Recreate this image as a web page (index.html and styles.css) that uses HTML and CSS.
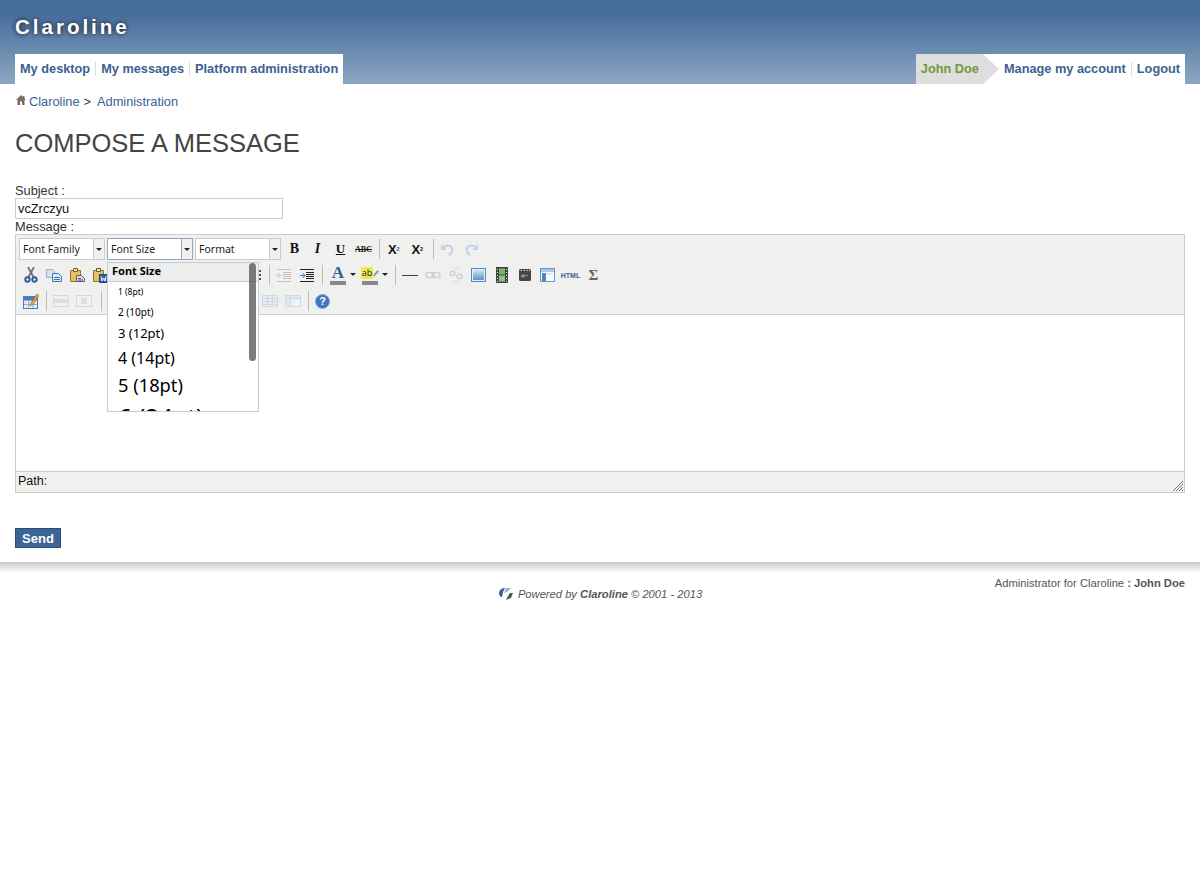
FILE: index.html
```html
<!DOCTYPE html>
<html lang="en">
<head>
    <meta charset="UTF-8">
    <meta name="viewport" content="width=device-width, initial-scale=1.0">
    <title>Compose a message - Claroline</title>
    <link rel="stylesheet" href="styles.css">
</head>
<body>
    <svg class="sprites" width="0" height="0">
        <defs>
            <linearGradient id="blueFill" x1="0" y1="0" x2="0" y2="1">
                <stop offset="0" stop-color="#cfe0f2"/>
                <stop offset="1" stop-color="#5f93c9"/>
            </linearGradient>
            <symbol id="i-cut" viewBox="0 0 16 16">
                <path d="M5 0l5.500 10M11 0L5.500 10" stroke="#66727f" stroke-width="1.800" fill="none"/>
                <circle cx="4.500" cy="12.500" r="2.200" fill="none" stroke="#2a5a9c" stroke-width="1.900"/>
                <circle cx="11.500" cy="12.500" r="2.200" fill="none" stroke="#2a5a9c" stroke-width="1.900"/>
            </symbol>
            <symbol id="i-copy" viewBox="0 0 16 16">
                <path d="M.5 2.500h6l2 2v6h-8z" fill="#d5e3f3" stroke="#8fb0d6"/>
                <path d="M6.500 6.500h6l3 3v5h-9z" fill="#dfeaf6" stroke="#3f74b5"/>
                <path d="M8 10.500h6M8 12.500h6" stroke="#3f74b5"/>
            </symbol>
            <symbol id="i-paste" viewBox="0 0 16 16">
                <path d="M1.500 3.500h10v11h-10z" fill="#e6c164" stroke="#94712a"/>
                <path d="M4.500 1.500h4v3h-4z" fill="#f2e3b0" stroke="#6d5a2a"/>
                <path d="M7.500 8.500h5l3 3v3h-8z" fill="#d9dde2" stroke="#55606e"/>
                <path d="M9 11.500h3M9 13h5" stroke="#55606e"/>
            </symbol>
            <symbol id="i-word" viewBox="0 0 16 16">
                <path d="M1.500 3.500h10v11h-10z" fill="#e6c164" stroke="#94712a"/>
                <path d="M4.500 1.500h4v3h-4z" fill="#f2e3b0" stroke="#6d5a2a"/>
                <path d="M7.500 7.500h8v8h-8z" fill="#2d62ad" stroke="#1d4380"/>
                <path d="M9 9.500l1 4.500 1.500-3 1.500 3 1-4.500" fill="none" stroke="#fff"/>
            </symbol>
            <symbol id="i-outdent" viewBox="0 0 16 16">
                <path d="M1 2.500h14M7 5.500h8M7 7.500h8M7 9.500h8M7 11.500h8M1 14.500h14" stroke="#c2c2c2"/>
                <path d="M6 8.500H1M3.500 6L1 8.500 3.500 11" stroke="#b6cde6" fill="none"/>
            </symbol>
            <symbol id="i-indent" viewBox="0 0 16 16">
                <path d="M1 2.500h14M7 5.500h8M7 7.500h8M7 9.500h8M7 11.500h8M1 14.500h14" stroke="#1f1f1f"/>
                <path d="M1 8.500h5M3.500 6L6 8.500 3.500 11" stroke="#2f74c0" fill="none"/>
            </symbol>
            <symbol id="i-link" viewBox="0 0 16 16">
                <rect x="1" y="5.500" width="8" height="5" rx="2.500" fill="none" stroke="#cdd1d6" stroke-width="1.500"/>
                <rect x="7" y="5.500" width="8" height="5" rx="2.500" fill="none" stroke="#cdd1d6" stroke-width="1.500"/>
            </symbol>
            <symbol id="i-unlink" viewBox="0 0 16 16">
                <rect x="2" y="4.500" width="5" height="4" rx="2" fill="none" stroke="#cdd1d6" stroke-width="1.400"/>
                <rect x="9" y="7.500" width="5" height="4" rx="2" fill="none" stroke="#cdd1d6" stroke-width="1.400"/>
                <path d="M4 0l1.500 2.500M12 0l-1.500 2.500M4 16l1.500-2.500M12 16l-1.500-2.500M8 0v3M8 13v3" stroke="#d8dbde"/>
            </symbol>
            <symbol id="i-image" viewBox="0 0 16 16">
                <rect x=".5" y="1.500" width="14" height="13" fill="#e9eef4" stroke="#5d88b5"/>
                <rect x="2" y="3" width="11" height="10" fill="url(#blueFill)"/>
            </symbol>
            <symbol id="i-media" viewBox="0 0 16 16">
                <path d="M2 0h12v16H2z" fill="#3c4a3c"/>
                <path d="M5 1.500h6v6H5z" fill="#7cb56c"/>
                <path d="M5 8.500h6v6H5z" fill="#8fbf8a"/>
                <path d="M3 2.500h1M3 5.500h1M3 8.500h1M3 11.500h1M3 14.500h1M12 2.500h1M12 5.500h1M12 8.500h1M12 11.500h1M12 14.500h1" stroke="#ddd"/>
            </symbol>
            <symbol id="i-video" viewBox="0 0 16 16">
                <rect x="2" y="2" width="12" height="12" rx="1.500" fill="#444"/>
                <path d="M3.500 3.500h1.500M6.500 3.500H8M9.500 3.500H11M12 3.500h1" stroke="#ddd"/>
                <path d="M5 7.500v3M5 9h2M7 7.500v3M8.500 8.500h2" stroke="#bbb"/>
            </symbol>
            <symbol id="i-template" viewBox="0 0 16 16">
                <rect x=".5" y="1.500" width="14" height="13" fill="#fafcff" stroke="#6b94bf"/>
                <path d="M1 2h13v3H1z" fill="#a9c6e4"/>
                <path d="M2 6h4v8H2z" fill="#4f86c0"/>
                <path d="M7 6h6v2H7z" fill="#dbe7f3"/>
            </symbol>
            <symbol id="i-undo" viewBox="0 0 16 16">
                <path d="M3 7c3-4 10-3 9 3-.4 2-2 3.500-3 4" fill="none" stroke="#c3d3e6" stroke-width="2.200"/>
                <path d="M1 3v6h6z" fill="#c3d3e6"/>
            </symbol>
            <symbol id="i-redo" viewBox="0 0 16 16">
                <path d="M13 7C10 3 3 4 4 10c.4 2 2 3.500 3 4" fill="none" stroke="#c3d3e6" stroke-width="2.200"/>
                <path d="M15 3v6H9z" fill="#c3d3e6"/>
            </symbol>
            <symbol id="i-tableedit" viewBox="0 0 16 16">
                <rect x=".5" y="3.500" width="14" height="12" fill="#e3edf7" stroke="#4f7fb5"/>
                <path d="M1 7.500h13M1 11.500h13M5.500 4v11M10 4v11" stroke="#8fb0d6"/>
                <path d="M1 4h13v3H1z" fill="#4f7fb5"/>
                <path d="M8 10l6-9 2 1.500-6 9-3 1z" fill="#e8a040" stroke="#8b5a1c" stroke-width=".6"/>
            </symbol>
            <symbol id="i-tablerow" viewBox="0 0 16 16">
                <rect x=".5" y="2.500" width="15" height="11" fill="#eef0f2" stroke="#d5d9dd"/>
                <path d="M1 6h14v4H1z" fill="#d9dee3"/>
            </symbol>
            <symbol id="i-tablecell" viewBox="0 0 16 16">
                <rect x=".5" y="2.500" width="15" height="11" fill="#eef0f2" stroke="#d5d9dd"/>
                <rect x="5" y="5" width="6" height="6" fill="#d9dee3"/>
            </symbol>
            <symbol id="i-grid" viewBox="0 0 16 16">
                <rect x=".5" y="2.500" width="15" height="11" fill="#e6edf5" stroke="#d0d8e0"/>
                <path d="M1 5.500h14M1 8.500h14M1 11.500h14M5.500 3v10M10.500 3v10" stroke="#d0d8e0"/>
            </symbol>
            <symbol id="i-panel" viewBox="0 0 16 16">
                <rect x=".5" y="2.500" width="15" height="11" fill="#dfe9f3" stroke="#d0d8e0"/>
                <path d="M1 5.500h14M5.500 3v10" stroke="#d0d8e0"/>
                <rect x="6" y="6" width="9" height="7" fill="#edf3f8"/>
            </symbol>
            <symbol id="i-pencil" viewBox="0 0 8 10">
                <path d="M1 7l5-6 2 1.500-5 6-3 1z" fill="#8d9aa8"/>
            </symbol>
            <symbol id="i-house" viewBox="0 0 10 10">
                <path d="M5 0L0 5h1.500v5h2.500V6.500h2V10h2.500V5H10L8.500 3.500V1H7v1z" fill="#7a6a60"/>
            </symbol>
            <symbol id="i-grip" viewBox="0 0 12 12">
                <path d="M1 11L11 1M4 11l7-7M7 11l4-4M10 11l1-1" stroke="#777" fill="none"/>
            </symbol>
        </defs>
    </svg>

    <header class="banner">
        <div class="logo">Claroline</div>
        <nav class="tabs">
            <ul class="tab-group">
                <li><a href="#">My desktop</a></li>
                <li><a href="#">My messages</a></li>
                <li><a href="#">Platform administration</a></li>
            </ul>
            <ul class="tab-group">
                <li class="user-name">John Doe</li>
                <li><a href="#">Manage my account</a></li>
                <li><a href="#">Logout</a></li>
            </ul>
        </nav>
    </header>

    <main class="content">
        <div class="breadcrumb">
            <svg class="home-icon"><use href="#i-house"/></svg>
            <a href="#">Claroline</a>
            <span class="crumb-sep">&gt;</span>
            <a href="#">Administration</a>
        </div>

        <h1>COMPOSE A MESSAGE</h1>

        <form class="message-form">
            <label for="subject">Subject :</label>
            <input type="text" id="subject" value="vcZrczyu">
            <label for="message">Message :</label>

            <div class="editor" id="message">
                <div class="toolbar">
                    <div class="tool-row">
                        <div class="select select-family"><span>Font Family</span><i></i></div>
                        <div class="select select-size"><span>Font Size</span><i></i></div>
                        <div class="select select-format"><span>Format</span><i></i></div>
                        <div class="btn glyph bold">B</div>
                        <div class="btn glyph italic">I</div>
                        <div class="btn glyph under">U</div>
                        <div class="btn glyph strike">ABC</div>
                        <div class="sep"></div>
                        <div class="btn glyph script">X<sub>2</sub></div>
                        <div class="btn glyph script">X<sup>2</sup></div>
                        <div class="sep"></div>
                        <div class="btn"><svg><use href="#i-undo"/></svg></div>
                        <div class="btn"><svg><use href="#i-redo"/></svg></div>
                    </div>
                    <div class="tool-row">
                        <div class="btn"><svg><use href="#i-cut"/></svg></div>
                        <div class="btn"><svg><use href="#i-copy"/></svg></div>
                        <div class="btn"><svg><use href="#i-paste"/></svg></div>
                        <div class="btn"><svg><use href="#i-word"/></svg></div>
                        <div class="hidden-tools"></div>
                        <div class="dots"></div>
                        <div class="sep"></div>
                        <div class="btn"><svg><use href="#i-outdent"/></svg></div>
                        <div class="btn"><svg><use href="#i-indent"/></svg></div>
                        <div class="sep"></div>
                        <div class="btn color color-fore"><span class="fore">A</span><b class="color-bar"></b></div>
                        <i class="mini-arrow"></i>
                        <div class="btn color">
                            <span class="back-row"><span class="back">ab</span><svg class="pencil"><use href="#i-pencil"/></svg></span>
                            <b class="color-bar"></b>
                        </div>
                        <i class="mini-arrow"></i>
                        <div class="sep"></div>
                        <div class="btn"><span class="rule"></span></div>
                        <div class="btn"><svg><use href="#i-link"/></svg></div>
                        <div class="btn"><svg><use href="#i-unlink"/></svg></div>
                        <div class="btn"><svg><use href="#i-image"/></svg></div>
                        <div class="btn"><svg><use href="#i-media"/></svg></div>
                        <div class="btn"><svg><use href="#i-video"/></svg></div>
                        <div class="btn"><svg><use href="#i-template"/></svg></div>
                        <div class="btn glyph html">HTML</div>
                        <div class="btn glyph sigma">&Sigma;</div>
                    </div>
                    <div class="tool-row">
                        <div class="btn"><svg><use href="#i-tableedit"/></svg></div>
                        <div class="sep"></div>
                        <div class="btn"><svg><use href="#i-tablerow"/></svg></div>
                        <div class="btn"><svg><use href="#i-tablecell"/></svg></div>
                        <div class="sep sep-wide"></div>
                        <div class="hidden-tools short"></div>
                        <div class="btn"><svg><use href="#i-grid"/></svg></div>
                        <div class="btn"><svg><use href="#i-panel"/></svg></div>
                        <div class="sep"></div>
                        <div class="btn help"><span>?</span></div>
                    </div>
                </div>
                <div class="edit-area"></div>
                <div class="status-bar">
                    <span>Path:</span>
                    <svg class="grip"><use href="#i-grip"/></svg>
                </div>

                <div class="size-menu">
                    <div class="size-title">Font Size</div>
                    <div class="size-item s1">1 (8pt)</div>
                    <div class="size-item s2">2 (10pt)</div>
                    <div class="size-item s3">3 (12pt)</div>
                    <div class="size-item s4">4 (14pt)</div>
                    <div class="size-item s5">5 (18pt)</div>
                    <div class="size-item s6">6 (24pt)</div>
                    <div class="size-scroll"></div>
                </div>
            </div>

            <button type="submit" class="send">Send</button>
        </form>
    </main>

    <footer class="footer">
        <div class="admin-line">Administrator for Claroline <b>: John Doe</b></div>
        <div class="powered">
            <svg class="powered-logo" viewBox="0 0 16 14">
                <path d="M1 6c0-3 3-5 6-5L5 5 4 10C2 10 1 8 1 6z" fill="#3c5f95"/>
                <path d="M8 1h5l-4 4-3 1z" fill="#9fb2cc"/>
                <path d="M12 6l3 0-2 5-5 2 2-4z" fill="#555"/>
            </svg>
            <span>Powered by <b>Claroline</b> &copy; 2001 - 2013</span>
        </div>
    </footer>
</body>
</html>
```

FILE: styles.css
```css
* {
    margin: 0;
    padding: 0;
    box-sizing: border-box;
}

body {
    background-color: white;
    color: #333;
    font-family: "Liberation Sans", Arial, sans-serif;
    font-size: 13px;
}

a {
    color: #3a6291;
    text-decoration: none;
}

ul {
    list-style: none;
}

.sprites {
    position: absolute;
}

/* banner */
.banner {
    height: 84px;
    padding: 0 15px;
    background: linear-gradient(#456c9b 0%, #456c9b 15%, #8ea6c2 100%);
    display: flex;
    flex-direction: column;
}

.logo {
    height: 54px;
    padding-top: 15px;
    color: white;
    font-size: 20.5px;
    line-height: 23px;
    font-weight: bold;
    letter-spacing: 3px;
    text-shadow: 0 0 5px rgba(0, 0, 0, 0.9);
}

.tabs {
    display: flex;
    justify-content: space-between;
    height: 30px;
}

.tab-group {
    display: flex;
    align-items: center;
    background-color: white;
    padding: 0 5px;
    font-weight: bold;
    font-size: 12.75px;
}

.tab-group li {
    padding: 0 5px;
    border-left: 1px solid #ddd;
    line-height: 14px;
}

.tab-group li:first-child,
.tab-group .user-name + li {
    padding-left: 0;
    border-left: 0;
}

.tab-group li:last-child {
    padding-right: 0;
}

.tab-group li.user-name {
    position: relative;
    align-self: stretch;
    margin: 0 21px 0 -5px;
    padding: 0 4px 0 5px;
    line-height: 30px;
    color: #6f9a3c;
    background-color: #dedede;
}

.user-name::after {
    content: "";
    position: absolute;
    left: 100%;
    top: 0;
    border-left: 16px solid #dedede;
    border-top: 15px solid transparent;
    border-bottom: 15px solid transparent;
}

/* content */
.content {
    padding: 0 15px;
}

.breadcrumb {
    height: 36px;
    padding-top: 10px;
    display: flex;
    align-items: flex-start;
    line-height: 15px;
    font-size: 12.8px;
}

.home-icon {
    width: 10px;
    height: 10px;
    margin: 1px 3px 0 1px;
}

.crumb-sep {
    margin: 0 6px 0 4px;
}

h1 {
    height: 64px;
    padding-top: 8px;
    font-size: 25.5px;
    line-height: 30px;
    font-weight: normal;
    color: #444;
}

.message-form label {
    display: block;
    line-height: 14px;
    font-size: 12.8px;
}

.message-form input {
    display: block;
    width: 268px;
    height: 21px;
    padding: 0 2px;
    border: 1px solid #ccc;
    margin-bottom: 1px;
    font-family: "Liberation Sans", Arial, sans-serif;
    font-size: 12.8px;
    color: #111;
}

/* editor */
.editor {
    position: relative;
    height: 259px;
    display: flex;
    flex-direction: column;
    border: 1px solid #ccc;
    font-family: "Noto Sans", sans-serif;
}

.toolbar {
    height: 80px;
    padding: 1px 0 0 3px;
    background-color: #f0f0ee;
    border-bottom: 1px solid #ccc;
}

.tool-row {
    display: flex;
    align-items: center;
    height: 26px;
}

.select {
    display: flex;
    align-items: stretch;
    height: 22px;
    margin-right: 2px;
    font-size: 10.5px;
    color: #222;
    background-color: white;
    border: 1px solid #ccc;
}

.select span {
    flex: 1;
    padding-left: 3px;
    line-height: 20px;
    border-right: 1px solid #ccc;
}

.select i {
    width: 10px;
    background-color: #f0f0ee;
    position: relative;
}

.select i::after,
.mini-arrow::after {
    content: "";
    position: absolute;
    left: 2px;
    top: 9px;
    border-top: 3px solid #222;
    border-left: 3px solid transparent;
    border-right: 3px solid transparent;
}

.select-family,
.select-format {
    width: 86px;
}

.select-size {
    width: 86px;
    border-color: #8ea7c6;
}

.select-size span {
    border-color: #8ea7c6;
}

.btn {
    flex: none;
    width: 23px;
    height: 22px;
    display: flex;
    align-items: center;
    justify-content: center;
    position: relative;
}

.btn svg {
    width: 16px;
    height: 16px;
}

.sep {
    flex: none;
    width: 1px;
    height: 20px;
    margin: 0 2px 0 4px;
    background-color: #bbb;
}

.sep-wide {
    margin-left: 6px;
}

.glyph {
    color: #111;
    font-family: "Liberation Serif", serif;
    font-weight: bold;
}

.bold {
    font-size: 14px;
}

.italic {
    font-size: 14px;
    font-style: italic;
}

.under {
    font-size: 13px;
    text-decoration: underline;
}

.strike {
    font-size: 8px;
    text-decoration: line-through;
}

.script {
    width: 23.5px;
    font-family: "Liberation Sans", sans-serif;
    font-size: 13px;
}

.script sub,
.script sup {
    font-size: 5.5px;
    line-height: 0;
}

.script sub {
    vertical-align: -3px;
    color: #2f66ad;
}

.script sup {
    vertical-align: 6px;
}

.html {
    font-family: "Liberation Sans", sans-serif;
    font-size: 7px;
    color: #3c5f95;
}

.sigma {
    font-size: 15px;
    color: #666;
}

.hidden-tools {
    flex: none;
    width: 145px;
}

.hidden-tools.short {
    width: 154px;
}

.dots {
    flex: none;
    width: 2px;
    height: 10px;
    margin: 0 4px 0 3px;
    border-left: 2px dotted #555;
}

.color {
    flex-direction: column;
    width: 16px;
    margin-left: 3px;
}

.color-fore {
    margin-left: 5px;
}

.fore {
    font-family: "Liberation Serif", serif;
    font-weight: bold;
    font-size: 17px;
    line-height: 16px;
    color: #2f5f9f;
}

.back-row {
    display: flex;
    align-items: center;
    height: 16px;
}

.back {
    font-size: 9px;
    line-height: 12px;
    padding: 0 1px;
    color: #333;
    background-color: #f2e84a;
}

.btn .pencil {
    width: 6px;
    height: 10px;
}

.color-bar {
    width: 16px;
    height: 4px;
    background-color: #888;
}

.mini-arrow {
    flex: none;
    position: relative;
    width: 13px;
    height: 22px;
}

.mini-arrow::after {
    left: 4px;
}

.rule {
    width: 16px;
    height: 1px;
    background-color: #444;
}

.help span {
    width: 15px;
    height: 15px;
    border-radius: 50%;
    text-align: center;
    color: white;
    font-family: "Liberation Sans", sans-serif;
    font-weight: bold;
    font-size: 11px;
    line-height: 13px;
    background-color: #3f74c0;
    border: 1px solid #86a8d8;
}

.edit-area {
    height: 156px;
    background-color: white;
}

.status-bar {
    flex: 1;
    display: flex;
    justify-content: space-between;
    padding-left: 2px;
    border-top: 1px solid #ccc;
    background-color: #f0f0ee;
    font-family: "Liberation Sans", sans-serif;
    font-size: 12.5px;
    line-height: 19px;
    color: #111;
}

.grip {
    width: 12px;
    height: 12px;
    align-self: flex-end;
}

/* font size dropdown */
.size-menu {
    position: absolute;
    left: 91px;
    top: 27px;
    width: 152px;
    height: 150px;
    overflow: hidden;
    background-color: white;
    border: 1px solid #ccc;
    color: black;
}

.size-title {
    height: 19px;
    padding-left: 4px;
    background-color: #eee;
    border-bottom: 1px solid #ccc;
    font-size: 11px;
    line-height: 16px;
    font-weight: bold;
}

.size-item {
    padding-left: 10px;
    white-space: nowrap;
}

.s1 {
    font-size: 8.5px;
    line-height: 20px;
}

.s2 {
    font-size: 10px;
    line-height: 21px;
}

.s3 {
    font-size: 13px;
    line-height: 21px;
}

.s4 {
    font-size: 16px;
    line-height: 28px;
}

.s5 {
    font-size: 18.3px;
    line-height: 26px;
}

.s6 {
    font-size: 24px;
    line-height: 37px;
}

.size-scroll {
    position: absolute;
    left: 141px;
    top: 0;
    width: 7px;
    height: 98px;
    border-radius: 4px;
    background-color: rgba(80, 80, 80, 0.75);
}

.send {
    display: block;
    width: 46px;
    height: 20px;
    margin-top: 35px;
    background-color: #3c6595;
    border: 1px solid #2a4d7d;
    color: white;
    font-family: "Liberation Sans", sans-serif;
    font-weight: bold;
    font-size: 13px;
}

/* footer */
.footer {
    margin-top: 14px;
    height: 60px;
    padding: 14px 15px 0;
    background: linear-gradient(#c8c8c8, white 11px);
    color: #555;
    font-size: 11.2px;
}

.admin-line {
    text-align: right;
    line-height: 14px;
}

.powered {
    display: flex;
    justify-content: center;
    align-items: center;
    margin-top: -3px;
    font-style: italic;
    line-height: 14px;
}

.powered-logo {
    width: 16px;
    height: 14px;
    margin-right: 4px;
}
```
